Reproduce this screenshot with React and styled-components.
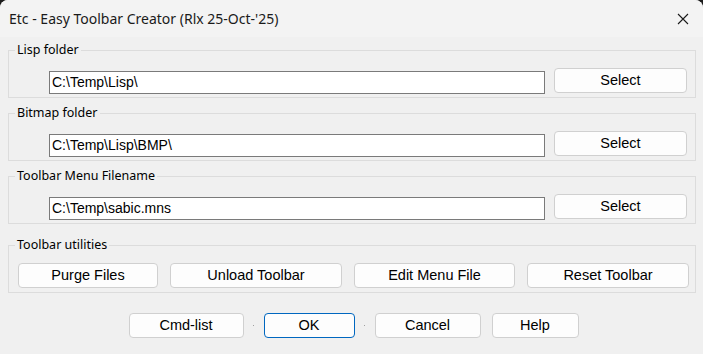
import styled, { createGlobalStyle } from "styled-components";

const GlobalStyle = createGlobalStyle`
  html, body {
    margin: 0;
    padding: 0;
    background: #1c1c1c;
  }
  * {
    box-sizing: border-box;
  }
`;

const Window = styled.div`
  width: 703px;
  height: 354px;
  background: #f0f0f0;
  border-radius: 8px 8px 0 0;
  overflow: hidden;
  display: flex;
  flex-direction: column;
  font-family: "Liberation Sans", Arial, sans-serif;
  font-size: 13px;
  color: #000;
`;

const TitleBar = styled.div`
  height: 37px;
  flex-shrink: 0;
  display: flex;
  align-items: center;
  justify-content: space-between;
  padding: 0 14px 0 9px;
  background: #f3f3f3;
`;

const Title = styled.span`
  font-family: "Noto Sans", "Open Sans", sans-serif;
  font-size: 14px;
  color: #1a1a1a;
  padding-bottom: 1px;
`;

const CloseButton = styled.button`
  all: unset;
  display: flex;
  align-items: center;
  justify-content: center;
  width: 12px;
  height: 12px;
  cursor: pointer;
`;

const Content = styled.div`
  flex: 1;
  display: flex;
  flex-direction: column;
  padding: 5px 7px 0 8px;
`;

const Group = styled.fieldset`
  margin: ${(p) => (p.$gapTop ? p.$gapTop : 0)}px 0 0 0;
  padding: 10px 8px ${(p) => p.$padBottom ?? 3}px 6px;
  border: 1px solid #dcdcdc;
  min-width: 0;
`;

const Legend = styled.legend`
  padding: 0 2px;
  font-family: "Noto Sans", "Open Sans", sans-serif;
  font-size: 12.5px;
  line-height: 16px;
  color: #000;
`;

const PathRow = styled.div`
  display: flex;
  align-items: flex-start;
  gap: 9px;
  padding-left: 34px;
`;

const PathInput = styled.input`
  flex: 1;
  min-width: 0;
  height: 23px;
  margin-top: 3px;
  border: 1px solid #7a7a7a;
  background: #fff;
  padding: 0 2px 1px;
  font-family: "Liberation Sans", Arial, sans-serif;
  font-size: 14px;
  color: #000;
  outline: none;
`;

const Button = styled.button`
  height: 25px;
  width: ${(p) => p.$w}px;
  flex-shrink: 0;
  margin: 0;
  padding: 0 0 1px;
  background: #fdfdfd;
  border: 1px solid ${(p) => (p.$default ? "#0067c0" : "#d0d0d0")};
  border-radius: 4px;
  font-family: "Liberation Sans", Arial, sans-serif;
  font-size: 14.5px;
  color: #000;
  cursor: pointer;
`;

const UtilityRow = styled.div`
  display: flex;
  gap: 12px;
  padding-left: 3px;
`;

const Footer = styled.div`
  display: flex;
  justify-content: center;
  align-items: center;
  margin-top: 20px;
  padding-left: 3px;
`;

const Spacer = styled.span`
  width: ${(p) => p.$w}px;
  display: flex;
  justify-content: center;
  &::after {
    content: "";
    display: ${(p) => (p.$dot ? "block" : "none")};
    width: 1px;
    height: 1px;
    background: #a0a0a0;
  }
`;

const folders = [
  { label: "Lisp folder", value: "C:\\Temp\\Lisp\\" },
  { label: "Bitmap folder", value: "C:\\Temp\\Lisp\\BMP\\" },
  { label: "Toolbar Menu Filename", value: "C:\\Temp\\sabic.mns" },
];

const utilities = [
  { label: "Purge Files", w: 140 },
  { label: "Unload Toolbar", w: 172 },
  { label: "Edit Menu File", w: 161 },
  { label: "Reset Toolbar", w: 162 },
];

function App() {
  return (
    <>
      <GlobalStyle />
      <Window>
        <TitleBar>
          <Title>Etc - Easy Toolbar Creator (Rlx 25-Oct-'25)</Title>
          <CloseButton aria-label="Close">
            <svg width="12" height="12" viewBox="0 0 12 12">
              <path d="M1 1 L11 11 M11 1 L1 11" stroke="#1a1a1a" strokeWidth="1.1" />
            </svg>
          </CloseButton>
        </TitleBar>

        <Content>
          {folders.map((f, i) => (
            <Group key={f.label} $gapTop={i === 0 ? 0 : 7}>
              <Legend>{f.label}</Legend>
              <PathRow>
                <PathInput defaultValue={f.value} />
                <Button $w={133}>Select</Button>
              </PathRow>
            </Group>
          ))}

          <Group $gapTop={13} $padBottom={4}>
            <Legend>Toolbar utilities</Legend>
            <UtilityRow>
              {utilities.map((u) => (
                <Button key={u.label} $w={u.w}>
                  {u.label}
                </Button>
              ))}
            </UtilityRow>
          </Group>

          <Footer>
            <Button $w={115}>Cmd-list</Button>
            <Spacer $w={20} $dot />
            <Button $w={91} $default>
              OK
            </Button>
            <Spacer $w={20} $dot />
            <Button $w={106}>Cancel</Button>
            <Spacer $w={11} />
            <Button $w={87}>Help</Button>
          </Footer>
        </Content>
      </Window>
    </>
  );
}

export default App;
